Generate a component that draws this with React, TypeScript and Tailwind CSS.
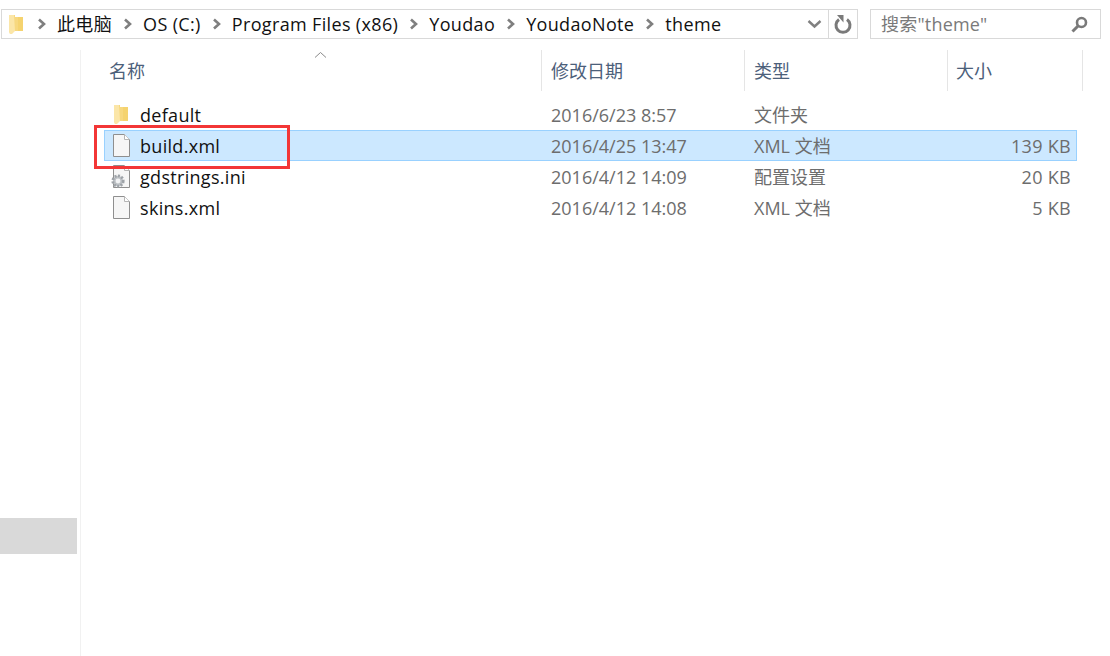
const FONT = "font-['Open_Sans','Noto_Sans_CJK_SC',sans-serif]";

function Folder({ className }: { className: string }) {
  return (
    <svg className={className} width="15" height="21" viewBox="0 0 15 21">
      <path d="M0 1 L6 1 L6 3 L14 3 L14 17 L3 17 L3 20 L1 20 L0 17 Z" fill="#f7d87f" />
      <path d="M0 1 L5 1 L6 17 L3 20 L1 20 L0 17 Z" fill="#fbe6a8" />
      <path d="M9 3 L14 3 L14 17 L9 17 Z" fill="#f5d36f" />
    </svg>
  );
}

function Doc({ className = "" }: { className?: string }) {
  return (
    <svg className={className} width="17" height="23" viewBox="0 0 17 23">
      <path d="M0.5 0.5 H11.5 L16.5 5.5 V22.5 H0.5 Z" fill="#f6f6f6" stroke="#8f8f8f" />
      <path d="M11.5 0.5 V5.5 H16.5" fill="#fff" stroke="#b5b5b5" />
    </svg>
  );
}

function Chevron() {
  return (
    <svg width="10" height="12" viewBox="0 0 10 12" className="shrink-0">
      <path d="M2 1.5 L7 6 L2 10.5" fill="none" stroke="#7f7f7f" strokeWidth="2.6" />
    </svg>
  );
}

function GearDoc() {
  return (
    <div className="relative w-[17px] h-[23px]">
      <Doc />
      <svg className="absolute left-[-3px] top-[8px]" width="16" height="16" viewBox="0 0 16 16">
        <circle cx="8" cy="8" r="5.2" fill="#bfc3c7" stroke="#9ea3a8" strokeWidth="2.8" strokeDasharray="2 1.4" />
        <circle cx="8" cy="8" r="2.4" fill="#f2f3f5" />
      </svg>
    </div>
  );
}

const rows = [
  { name: "default", date: "2016/6/23 8:57", type: "文件夹", size: "", icon: "folder" },
  { name: "build.xml", date: "2016/4/25 13:47", type: "XML 文档", size: "139 KB", icon: "doc", selected: true },
  { name: "gdstrings.ini", date: "2016/4/12 14:09", type: "配置设置", size: "20 KB", icon: "gear" },
  { name: "skins.xml", date: "2016/4/12 14:08", type: "XML 文档", size: "5 KB", icon: "doc" },
];

const crumbs = ["此电脑", "OS (C:)", "Program Files (x86)", "Youdao", "YoudaoNote", "theme"];

export default function App() {
  return (
    <div className={`${FONT} w-[1110px] h-[656px] bg-white overflow-hidden text-[18px] leading-[24px] text-[#111111]`}>
      {/* top bar */}
      <div className="flex h-[50px] pt-[9px] pl-[1px]">
        <div className="flex w-[857px] h-[30px] border border-[#d9d9d9]">
          <div className="flex items-center flex-1 min-w-0 pl-[7px]">
            <Folder className="mr-[13px] shrink-0" />
            <div className="flex items-center">
              {crumbs.map((c) => (
                <div key={c} className="flex items-center">
                  <Chevron />
                  <span className="ml-[10px] mr-[11px] whitespace-nowrap tracking-[0.35px]">{c}</span>
                </div>
              ))}
            </div>
          </div>
          <div className="flex items-center justify-start w-[28px] pl-[7px]">
            <svg width="16" height="10" viewBox="0 0 16 10">
              <path d="M1.5 2 L7.5 7.5 L13.5 2" fill="none" stroke="#808080" strokeWidth="2.4" />
            </svg>
          </div>
          <div className="flex items-center justify-center w-[29px] border-l border-[#d9d9d9]">
            <svg width="18" height="20" viewBox="0 0 18 20">
              <path d="M5 5.5 A7 7 0 1 0 13 5.5" fill="none" stroke="#7a7a7a" strokeWidth="3" />
              <path d="M3 1 L9.5 1 L9.5 8.5 Z" fill="#7a7a7a" />
            </svg>
          </div>
        </div>
        <div className="flex items-center justify-between ml-[12px] w-[231px] h-[30px] border border-[#d9d9d9] pl-[10px] pr-[12px] text-[#7a7a7a]">
          <span className="tracking-[0.2px]">搜索"theme"</span>
          <svg width="17" height="17" viewBox="0 0 17 17">
            <circle cx="10.5" cy="6.5" r="4.5" fill="none" stroke="#7a7a7a" strokeWidth="2.6" />
            <path d="M7 10 L1.5 15.5" stroke="#7a7a7a" strokeWidth="3" />
          </svg>
        </div>
      </div>

      <div className="flex h-[606px]">
        {/* nav pane */}
        <div className="w-[80px] shrink-0 pt-[468px]">
          <div className="w-[77px] h-[36px] bg-[#d9d9d9]" />
        </div>

        {/* list */}
        <div className="flex-1 border-l border-[#f1f1f1]">
          <div className="relative flex h-[41px] text-[#4c607a]">
            <svg className="absolute left-[233px] top-[1px]" width="13" height="8" viewBox="0 0 13 8">
              <path d="M1 6.5 L6.5 1.5 L12 6.5" fill="none" stroke="#8a8a8a" strokeWidth="1" />
            </svg>
            <div className="w-[461px] pl-[28px] pt-[9px] border-r border-[#e5e5e5]">名称</div>
            <div className="w-[203px] pl-[9px] pt-[9px] border-r border-[#e5e5e5]">修改日期</div>
            <div className="w-[203px] pl-[9px] pt-[9px] border-r border-[#e5e5e5]">类型</div>
            <div className="w-[135px] pl-[8px] pt-[9px] border-r border-[#e5e5e5]">大小</div>
          </div>

          <div className="relative pt-[8px] pl-[23px]">
            {rows.map((r) => (
              <div
                key={r.name}
                className={`flex items-center w-[973px] h-[31px] border ${r.selected ? "bg-[#cce8ff] border-[#99d1ff]" : "border-transparent"}`}
              >
                <div className="w-[35px] pl-[8px] shrink-0">
                  {r.icon === "folder" && <Folder className="ml-[1px]" />}
                  {r.icon === "doc" && <Doc />}
                  {r.icon === "gear" && <GearDoc />}
                </div>
                <div className="w-[411px] shrink-0 tracking-[0.3px]">{r.name}</div>
                <div className="w-[203px] shrink-0 text-[#6d6d6d]">{r.date}</div>
                <div className="w-[200px] shrink-0 text-[#6d6d6d]">{r.type}</div>
                <div className="flex-1 text-right pr-[5px] text-[#6d6d6d] tracking-[0.3px]">{r.size}</div>
              </div>
            ))}
            {/* annotation */}
            <div className="absolute left-[13px] top-[34px] w-[196px] h-[44px] border-[3px] border-[#f33636]" />
          </div>
        </div>
      </div>
    </div>
  );
}
